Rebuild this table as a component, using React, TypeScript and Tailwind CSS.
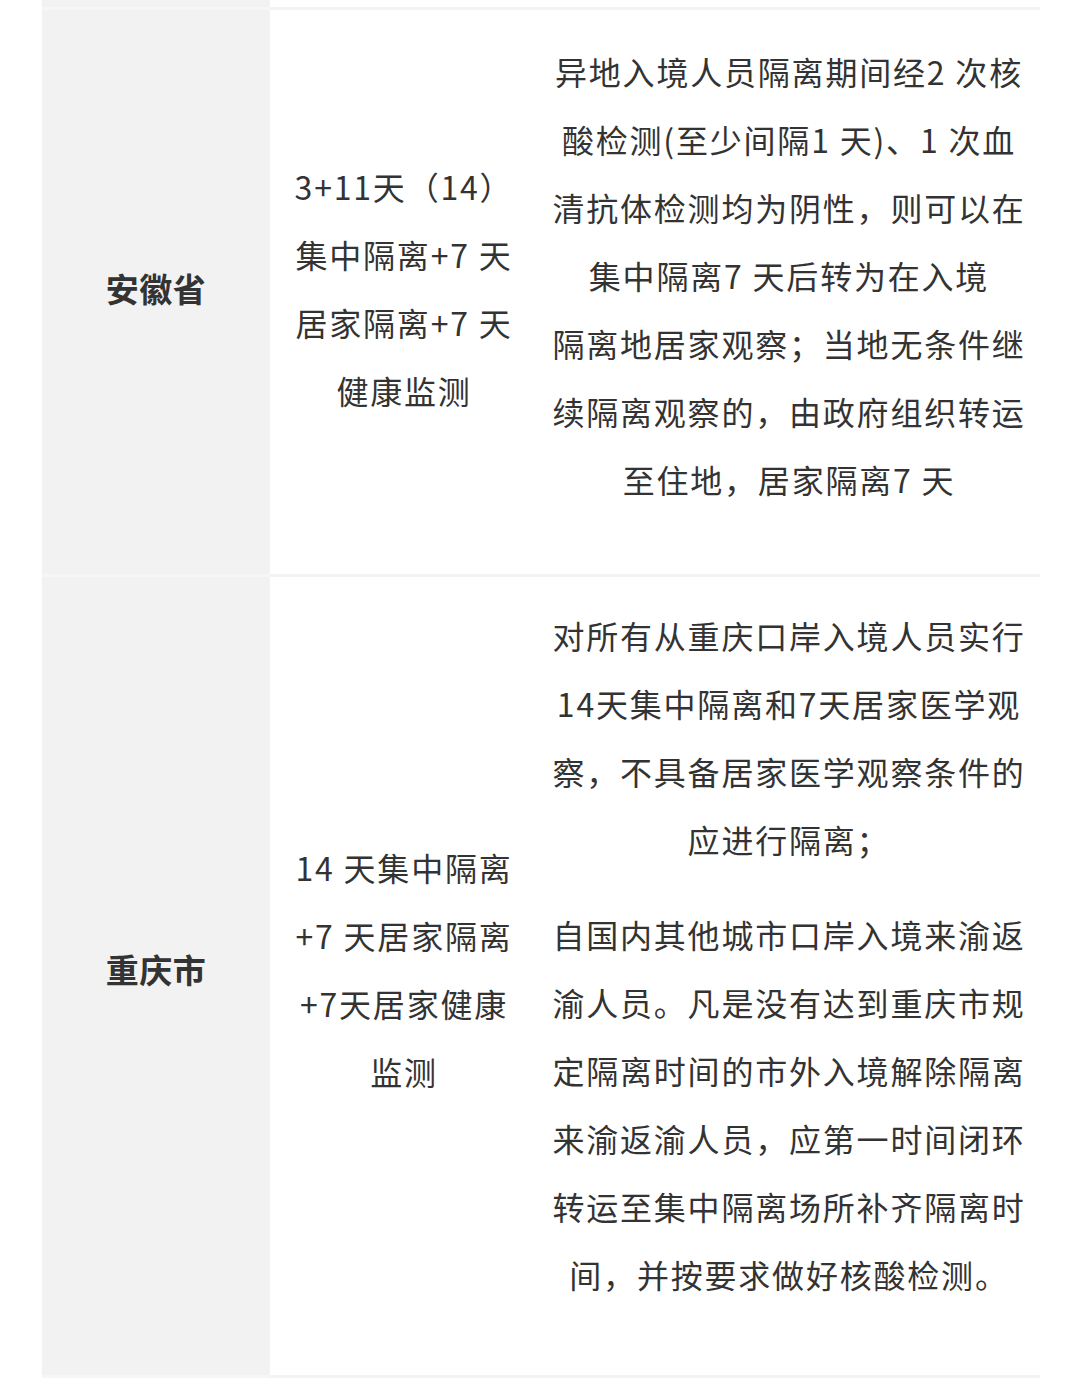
import React from "react";

const font = { fontFamily: '"Noto Sans CJK SC", "Noto Sans", sans-serif' };

function Lines({ lines }: { lines: string[] }) {
  return (
    <>
      {lines.map((l, i) => (
        <div key={i} className="whitespace-pre">
          {l}
        </div>
      ))}
    </>
  );
}

function Row({
  name,
  mid,
  paras,
  pad,
  side,
}: {
  name: string;
  mid: string[];
  paras: string[][];
  pad: string;
  side: string;
}) {
  return (
    <>
      <div className={`flex items-center justify-center border-t-[3px] border-[#f6f6f6] bg-[#f2f2f2] ${side}`}>
        <div className="text-[33px] font-bold leading-[40px] tracking-[0.5px] text-[#333333]">
          {name}
        </div>
      </div>
      <div className={`flex items-center justify-center border-t-[3px] border-[#f3f3f3] ${side}`}>
        <div className="text-center text-[32px] leading-[68px] tracking-[1.8px] text-[#333333]">
          <Lines lines={mid} />
        </div>
      </div>
      <div className={`flex flex-col items-center border-t-[3px] border-[#f3f3f3] ${pad}`}>
        {paras.map((p, i) => (
          <div
            key={i}
            className="mb-[27px] text-center text-[32px] leading-[68px] tracking-[1.8px] text-[#333333]"
          >
            <Lines lines={p} />
          </div>
        ))}
      </div>
    </>
  );
}

export default function App() {
  return (
    <div className="min-h-[1378px] w-[1080px] bg-white" style={font}>
      <div className="ml-[42px] grid w-[998px] grid-cols-[228px_268px_502px]">
        <div className="h-[7px] bg-[#f2f2f2]" />
        <div className="h-[7px]" />
        <div className="h-[7px]" />
        <Row
          name="安徽省"
          pad="pt-[27px] pb-[34px]"
          side="pb-[8px]"
          mid={["3+11天（14）", "集中隔离+7 天", "居家隔离+7 天", "健康监测"]}
          paras={[
            [
              "异地入境人员隔离期间经2 次核",
              "酸检测(至少间隔1 天)、1 次血",
              "清抗体检测均为阴性，则可以在",
              "集中隔离7 天后转为在入境",
              "隔离地居家观察；当地无条件继",
              "续隔离观察的，由政府组织转运",
              "至住地，居家隔离7 天",
            ],
          ]}
        />
        <Row
          name="重庆市"
          pad="pt-[24px] pb-[40px]"
          side="pb-[14px]"
          mid={["14 天集中隔离", "+7 天居家隔离", "+7天居家健康", "监测"]}
          paras={[
            [
              "对所有从重庆口岸入境人员实行",
              "14天集中隔离和7天居家医学观",
              "察，不具备居家医学观察条件的",
              "应进行隔离；",
            ],
            [
              "自国内其他城市口岸入境来渝返",
              "渝人员。凡是没有达到重庆市规",
              "定隔离时间的市外入境解除隔离",
              "来渝返渝人员，应第一时间闭环",
              "转运至集中隔离场所补齐隔离时",
              "间，并按要求做好核酸检测。",
            ],
          ]}
        />
        <div className="h-[10px] border-t-[3px] border-[#f6f6f6] bg-[#f2f2f2]" />
        <div className="h-[10px] border-t-[3px] border-[#f3f3f3]" />
        <div className="h-[10px] border-t-[3px] border-[#f3f3f3]" />
      </div>
    </div>
  );
}
